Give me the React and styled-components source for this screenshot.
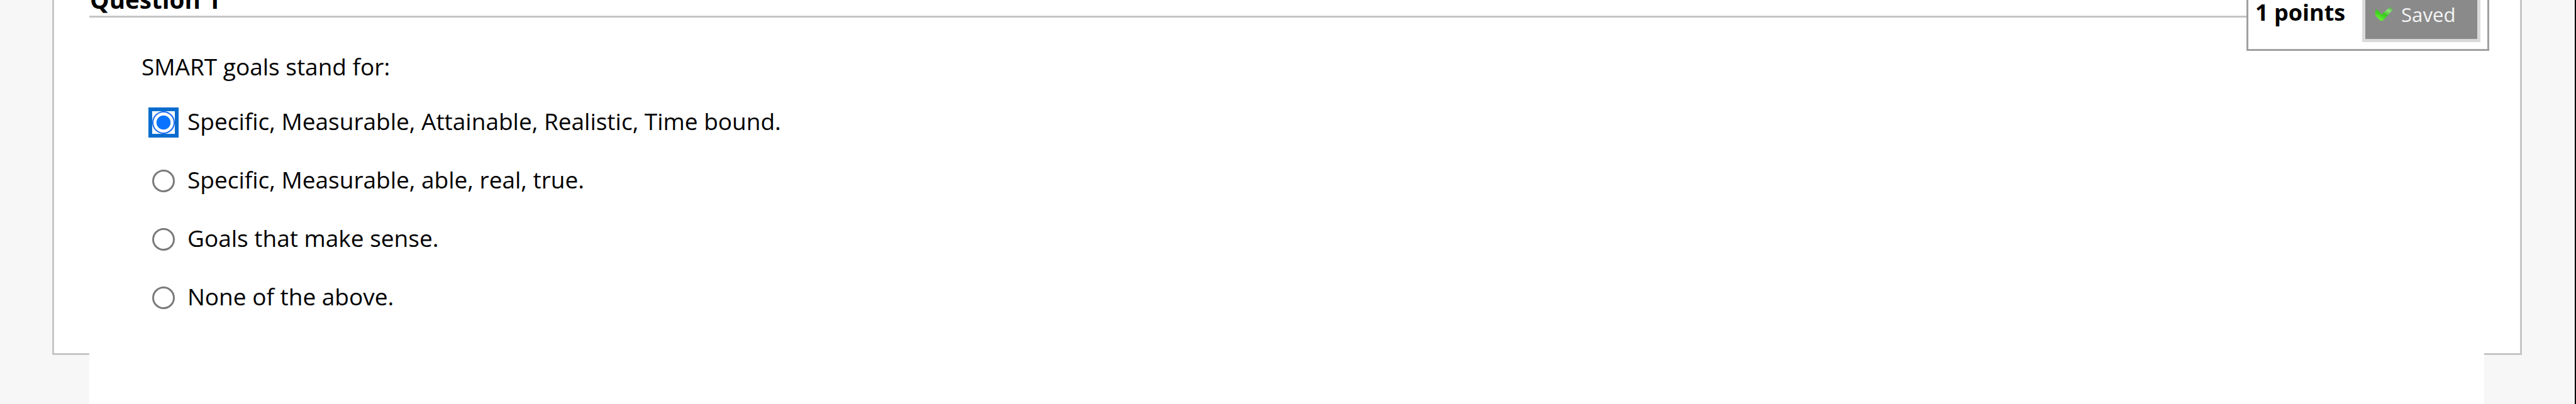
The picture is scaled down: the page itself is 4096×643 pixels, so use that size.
import React, { useState } from "react"
import styled, { createGlobalStyle } from "styled-components"

const GlobalStyle = createGlobalStyle`
  body {
    margin: 0;
    background-color: #f7f7f7;
    font-family: "Open Sans", "Noto Sans", sans-serif;
    color: #000;
  }
`

const Page = styled.div`
  box-sizing: border-box;
  width: 4096px;
  height: 643px;
  overflow: hidden;
  padding-left: 83px;
  border-right: 2px solid #000;
  background-color: #f7f7f7;
`

const Panel = styled.main`
  box-sizing: border-box;
  width: 3927px;
  height: 565px;
  padding: 0 57px 0 56px;
  border: 3px solid #c6c6c6;
  border-top: none;
  background-color: #fff;
`

// taller than the panel, covers its bottom border
const Content = styled.section`
  position: relative;
  height: 643px;
  background-color: #fff;
`

const Header = styled.header`
  box-sizing: border-box;
  display: flex;
  align-items: flex-end;
  height: 28px;
  padding: 0 0 0 1px;
  border-bottom: 3px solid #c4c4c4;
`

const Title = styled.h3`
  margin: 0;
  font-size: 38.6px;
  line-height: 52px;
  font-weight: 700;
  white-space: nowrap;
`

const Score = styled.div`
  position: absolute;
  top: 0;
  right: -8px;
  box-sizing: border-box;
  display: flex;
  width: 386px;
  height: 81px;
  padding: 0 11px 0 11px;
  justify-content: space-between;
  border: 3px solid #a0a0a0;
  border-top: none;
  background-color: #fff;
`

const Points = styled.span`
  font-size: 36px;
  line-height: 40px;
  font-weight: 700;
  white-space: nowrap;
`

const SavedButton = styled.button`
  box-sizing: border-box;
  display: flex;
  gap: 12px;
  width: 188px;
  height: 67px;
  padding: 0 0 0 15px;
  border: 5px solid #dadada;
  border-top: none;
  background-color: #8a8a8a;
  color: #f4f4f4;
  font-family: inherit;
  font-size: 31.2px;
  line-height: 46px;
  text-align: left;
`

const CheckIcon = styled.svg`
  flex: none;
  width: 30px;
  height: 26px;
  margin-top: 9px;
`

const Question = styled.p`
  margin: 52px 0 0 83px;
  font-size: 37px;
  line-height: 51px;
`

const Options = styled.ul`
  margin: 40px 0 0 94px;
  padding: 0;
  list-style: none;
`

const Option = styled.li`
  display: flex;
  align-items: center;
  height: 48px;
  margin-bottom: 44.9px;
  font-size: 37px;
  line-height: 50px;
  cursor: pointer;
`

const OptionText = styled.span`
  padding-bottom: 4px;
`

const RadioBox = styled.span`
  box-sizing: border-box;
  display: flex;
  align-items: center;
  justify-content: center;
  width: 48px;
  height: 48px;
  margin-right: 14px;
  border: 6px solid ${props => props.$checked ? "#0a6dcd" : "transparent"};
`

const Radio = styled.span`
  box-sizing: border-box;
  flex: none;
  width: 36px;
  height: 36px;
  border: ${props => props.$checked ? "2px solid #1a6cf5" : "3px solid #7a7a7a"};
  border-radius: 50%;
  background: ${props => props.$checked
    ? "radial-gradient(circle, #0a74ff 0 10.8px, #fff 11.6px)"
    : "#fff"};
`

const answers = [
  "Specific, Measurable, Attainable, Realistic, Time bound.",
  "Specific, Measurable, able, real, true.",
  "Goals that make sense.",
  "None of the above.",
]

const SavedCheck = () => (
  <CheckIcon viewBox="0 0 30 26">
    <defs>
      <linearGradient id="check" x1="1" y1="0" x2="0.3" y2="1">
        <stop offset="0" stopColor="#3f9a3a" />
        <stop offset="0.3" stopColor="#8fe07a" />
        <stop offset="0.6" stopColor="#35c81c" />
        <stop offset="1" stopColor="#6cf03a" />
      </linearGradient>
    </defs>
    <path d="M1 7 L5 7 L11 14 L24 2 L29 6 L13 24 L9 24 L1 16 Z" fill="url(#check)" />
  </CheckIcon>
)

const App = () => {
  const [selected, setSelected] = useState(0)

  return (
    <Page>
      <GlobalStyle />
      <Panel>
        <Content>
          <Header>
            <Title>Question 1</Title>
          </Header>
          <Score>
            <Points>1 points</Points>
            <SavedButton>
              <SavedCheck />
              Saved
            </SavedButton>
          </Score>
          <Question>SMART goals stand for:</Question>
          <Options>
            {answers.map((answer, i) => (
              <Option key={answer} onClick={() => setSelected(i)}>
                <RadioBox $checked={i === selected}>
                  <Radio $checked={i === selected} />
                </RadioBox>
                <OptionText>{answer}</OptionText>
              </Option>
            ))}
          </Options>
        </Content>
      </Panel>
    </Page>
  )
}

export default App
